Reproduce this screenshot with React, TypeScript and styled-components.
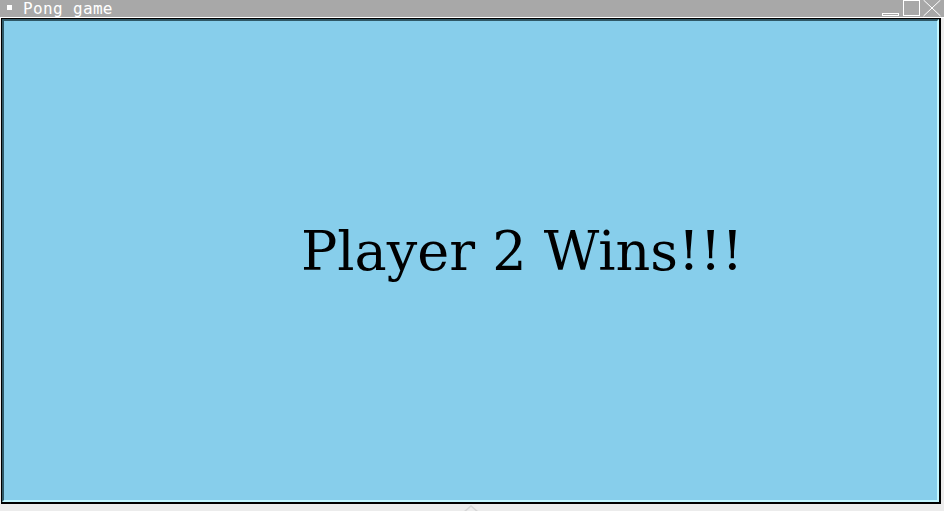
import React from "react";
import styled, { createGlobalStyle } from "styled-components";

const Global = createGlobalStyle`
  html, body { margin: 0; padding: 0; background: #ececec; width: 944px; height: 511px; overflow: hidden; }
  #root { width: 944px; height: 511px; }
`;

const Page = styled.div`
  width: 944px;
  height: 511px;
  display: flex;
  flex-direction: column;
  background: #ececec;
  position: relative;
`;

const TitleBar = styled.div`
  height: 17px;
  background: #a8a8a8;
  display: flex;
  align-items: center;
  padding-left: 7px;
  border-bottom: 1px solid #ffffff;
`;

const Bullet = styled.span`
  width: 5px;
  height: 5px;
  background: #ffffff;
  margin-right: 11px;
  margin-top: -2px;
`;

const Title = styled.span`
  font-family: "DejaVu Sans Mono", monospace;
  font-size: 16px;
  color: #ffffff;
  line-height: 17px;
  margin-top: -1px;
  letter-spacing: 0.35px;
`;

const Controls = styled.div`
  margin-left: auto;
  display: flex;
  align-items: flex-end;
  height: 17px;
  gap: 3px;
  padding-right: 3px;
`;

const Frame = styled.div`
  width: 940px;
  height: 486px;
  margin-left: 1px;
  border: 2px solid #000000;
  border-left-width: 1px;
  border-top-width: 1px;
  box-sizing: border-box;
  display: flex;
`;

const Canvas = styled.div`
  flex: 1;
  background: #87ceeb;
  border-top: 2px solid #2f5866;
  border-left: 2px solid #2f5866;
  border-right: 2px solid #c2f6ff;
  border-bottom: 2px solid #c2f6ff;
  display: flex;
  align-items: flex-start;
  padding-left: 297px;
  padding-top: 199px;
`;

const Message = styled.div`
  font-family: "DejaVu Serif", serif;
  font-size: 54px;
  color: #000000;
  line-height: 64px;
  white-space: nowrap;
`;

const Chevron = styled.svg`
  position: absolute;
  left: 463px;
  top: 505px;
`;

export default function App() {
  return (
    <Page>
      <Global />
      <TitleBar>
        <Bullet />
        <Title>Pong game</Title>
        <Controls>
          <svg width="18" height="17" viewBox="0 0 18 17">
            <rect x="0.5" y="13.5" width="16" height="2" fill="none" stroke="#ffffff" strokeWidth="1" />
          </svg>
          <svg width="17" height="17" viewBox="0 0 17 17">
            <rect x="0.5" y="0.5" width="16" height="15" fill="none" stroke="#ffffff" strokeWidth="1" />
          </svg>
          <svg width="18" height="17" viewBox="0 0 18 17">
            <path d="M0.5 0 L17.5 16 M17.5 0 L0.5 16" stroke="#ffffff" strokeWidth="1" fill="none" />
          </svg>
        </Controls>
      </TitleBar>
      <Frame>
        <Canvas>
          <Message>Player 2 Wins!!!</Message>
        </Canvas>
      </Frame>
      <Chevron width="16" height="8" viewBox="0 0 16 8">
        <path d="M1 7 L8 1 L15 7" stroke="#d6d6d6" strokeWidth="1.5" fill="none" />
      </Chevron>
    </Page>
  );
}
